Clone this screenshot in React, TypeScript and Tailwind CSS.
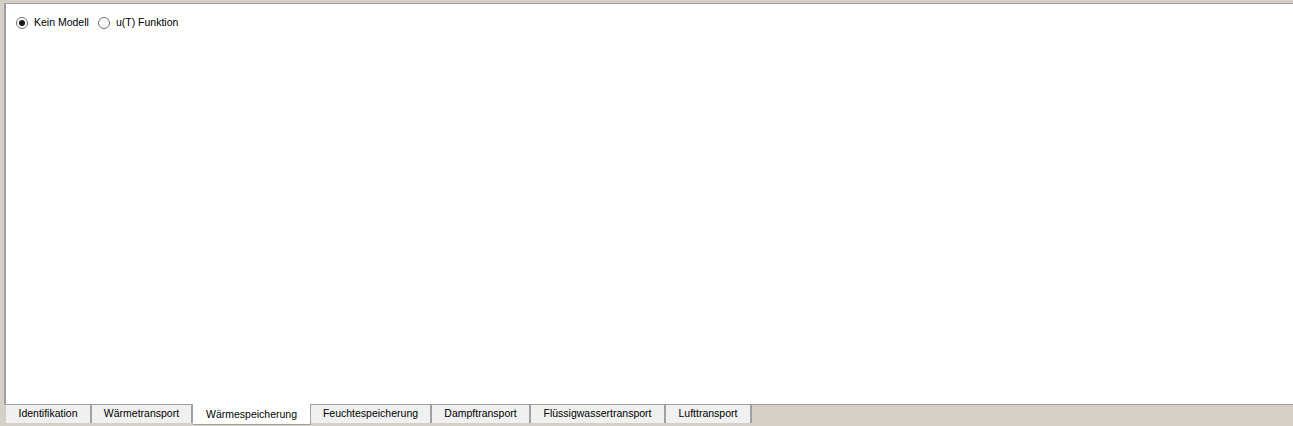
import { useState } from "react";

const tabs = [
  { label: "Identifikation", w: "w-[86px]" },
  { label: "Wärmetransport", w: "w-[101px]" },
  { label: "Wärmespeicherung", w: "w-[118px]" },
  { label: "Feuchtespeicherung", w: "w-[121px]" },
  { label: "Dampftransport", w: "w-[99px]" },
  { label: "Flüssigwassertransport", w: "w-[135px]" },
  { label: "Lufttransport", w: "w-[86px]" },
];

const Radio = ({ checked, label, onClick }: { checked: boolean; label: string; onClick: () => void }) => (
  <label className="flex items-center gap-[6px] cursor-default" onClick={onClick}>
    <span className="w-[12px] h-[12px] rounded-full border border-[#707070] bg-white flex items-center justify-center">
      {checked && <span className="w-[6px] h-[6px] rounded-full bg-[#1a1a1a]" />}
    </span>
    <span>{label}</span>
  </label>
);

export default function App() {
  const [model, setModel] = useState(0);
  const [active, setActive] = useState(2);

  return (
    <div
      className="h-[426px] w-full bg-[#d4d0c8] flex flex-col text-[10.5px] text-black"
      style={{ fontFamily: '"Liberation Sans", Arial, sans-serif' }}
    >
      <div className="ml-[4px] mt-[3px] h-[402px] bg-white border-l-2 border-t border-b border-[#a0a0a0]">
        <div className="flex items-center gap-[9px] pl-[10px] pt-[11px]">
          <Radio checked={model === 0} label="Kein Modell" onClick={() => setModel(0)} />
          <Radio checked={model === 1} label="u(T) Funktion" onClick={() => setModel(1)} />
        </div>
      </div>
      <div className="flex items-start pl-[6px]">
        {tabs.map((t, i) =>
          i === active ? (
            <div
              key={t.label}
              className={`${t.w} -mt-[1px] h-[21px] bg-white border-r border-b border-[#a0a0a0] flex items-center justify-center pt-[1px]`}
            >
              {t.label}
            </div>
          ) : (
            <div
              key={t.label}
              onClick={() => setActive(i)}
              className={`${t.w} h-[18px] bg-[#f0f0f0] border-r-2 border-[#a0a0a0] flex items-center justify-center`}
            >
              {t.label}
            </div>
          )
        )}
      </div>
    </div>
  );
}
